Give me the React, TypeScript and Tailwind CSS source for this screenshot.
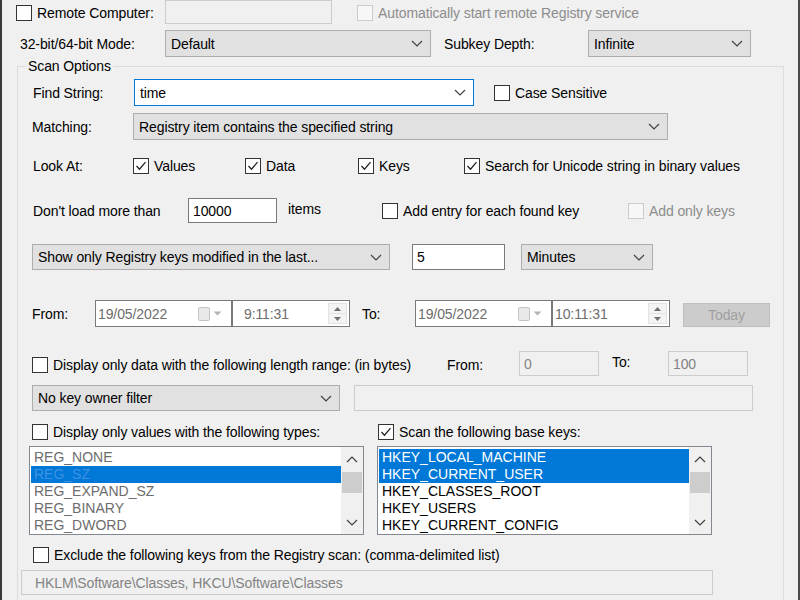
import type { ReactNode } from 'react';
import clsx from 'clsx';

function Chevron({ up }: { up?: boolean }) {
  return (
    <svg width="12" height="7" viewBox="0 0 12 7" className="shrink-0">
      <path d={up ? 'M1 6 L6 1 L11 6' : 'M1 1 L6 6 L11 1'} fill="none" stroke="#404040" strokeWidth="1.2" />
    </svg>
  );
}

function Check({ checked, disabled, label, className }: { checked?: boolean; disabled?: boolean; label: string; className?: string }) {
  return (
    <div className={clsx('flex items-center gap-[5px]', className)}>
      <div
        className={clsx(
          'w-[16px] h-[16px] shrink-0 border flex items-center justify-center',
          disabled ? 'border-[#cccccc] bg-[#f7f7f7]' : 'border-[#333333] bg-white'
        )}
      >
        {checked && (
          <svg width="14" height="14" viewBox="0 0 14 14">
            <path d="M2.5 7 L5.5 10.2 L11.5 3.2" fill="none" stroke="#222" strokeWidth="1.3" />
          </svg>
        )}
      </div>
      <span className={clsx('whitespace-nowrap', disabled && 'text-[#8c8c8c]')}>{label}</span>
    </div>
  );
}

function Combo({ className, children, focused }: { className: string; children: ReactNode; focused?: boolean }) {
  return (
    <div
      className={clsx(
        'flex items-center justify-between pl-[5px] pr-[7px] border shrink-0',
        focused ? 'bg-white border-[#0078d7]' : 'bg-[#e1e1e1] border-[#adadad]',
        className
      )}
    >
      <span className="whitespace-nowrap">{children}</span>
      <Chevron />
    </div>
  );
}

function TextBox({ className, value, disabled }: { className: string; value?: string; disabled?: boolean }) {
  return (
    <div
      className={clsx(
        'flex items-center pl-[4px] border shrink-0 whitespace-nowrap',
        disabled ? 'bg-[#f0f0f0] border-[#cccccc] text-[#838383]' : 'bg-white border-[#7a7a7a]',
        className
      )}
    >
      {value}
    </div>
  );
}

function DatePicker({ date, time, timePad }: { date: string; time: string; timePad: string }) {
  return (
    <div className="flex h-[27px]">
      <div className="w-[137px] h-full bg-white border border-[#7a7a7a] flex items-center pl-[2px] text-[#6d6d6d]">
        <span className="flex-1">{date}</span>
        <div className="w-[12px] h-[14px] rounded-[2px] border border-[#c4c4c4] bg-[#e9e9e9]" />
        <svg width="9" height="5" viewBox="0 0 9 5" className="ml-[3px] mr-[9px]">
          <path d="M0.5 0.5 L8.5 0.5 L4.5 4.5 Z" fill="#b5b5b5" />
        </svg>
      </div>
      <div className={clsx('w-[118px] h-full bg-white border border-[#7a7a7a] flex items-center text-[#6d6d6d]', timePad)}>
        <span className="flex-1">{time}</span>
        <div className="w-[19px] h-[21px] mr-[2px] flex flex-col border border-[#e2e2e2] bg-[#f4f4f4]">
          <div className="flex-1 flex items-center justify-center border-b border-[#e2e2e2]">
            <svg width="7" height="4" viewBox="0 0 7 4">
              <path d="M0 4 L3.5 0 L7 4 Z" fill="#707070" />
            </svg>
          </div>
          <div className="flex-1 flex items-center justify-center">
            <svg width="7" height="4" viewBox="0 0 7 4">
              <path d="M0 0 L7 0 L3.5 4 Z" fill="#707070" />
            </svg>
          </div>
        </div>
      </div>
    </div>
  );
}

function ScrollBar() {
  return (
    <div className="w-[22px] h-full flex flex-col bg-[#f0f0f0]">
      <div className="h-[24px] flex items-center justify-center">
        <Chevron up />
      </div>
      <div className="flex-1">
        <div className="mt-[1px] mx-[1px] h-[21px] bg-[#cdcdcd]" />
      </div>
      <div className="h-[24px] flex items-center justify-center">
        <Chevron />
      </div>
    </div>
  );
}

function ListBox({ items, selected, disabled }: { items: string[]; selected: number[]; disabled?: boolean }) {
  return (
    <div className="w-[335px] h-[89px] shrink-0 bg-white border border-[#828790] flex">
      <div className="flex-1 pt-[2px] pl-[1px]">
        {items.map((item, i) => {
          const isSel = selected.includes(i);
          return (
            <div
              key={item}
              className={clsx(
                'h-[17px] leading-[17px] pl-[3px] whitespace-nowrap tracking-normal',
                isSel ? 'bg-[#0078d7]' : '',
                isSel ? (disabled ? 'text-[#3f92e2]' : 'text-white') : disabled ? 'text-[#6d6d6d]' : 'text-black'
              )}
            >
              {item}
            </div>
          );
        })}
      </div>
      <ScrollBar />
    </div>
  );
}

export default function App() {
  return (
    <div className="w-[800px] h-[600px] overflow-hidden bg-[#f0f0f0] text-black text-[14px] leading-[16px] tracking-[-0.1px] font-['Liberation_Sans',Arial,sans-serif] shadow-[inset_2px_0_0_#3a3a3a,inset_-2px_0_0_#4a4a4a]">
      {/* remote computer */}
      <div className="flex items-center h-[24px]">
        <div className="w-[165px] pl-[16px] pt-[2px] shrink-0">
          <Check label="Remote Computer:" />
        </div>
        <TextBox className="w-[167px] h-[24px]" disabled />
        <Check className="ml-[25px] gap-[4px] pt-[2px]" disabled label="Automatically start remote Registry service" />
      </div>

      {/* mode / depth */}
      <div className="flex items-center h-[27px] mt-[6px]">
        <div className="w-[165px] pl-[20px] shrink-0">32-bit/64-bit Mode:</div>
        <Combo className="w-[266px] h-[27px]">Default</Combo>
        <div className="w-[157px] pl-[13px] shrink-0">Subkey Depth:</div>
        <Combo className="w-[163px] h-[27px]">Infinite</Combo>
      </div>

      <fieldset className="mt-[1px] ml-[17px] w-[767px] min-w-0 border border-[#dcdcdc] pb-[30px]">
        <legend className="ml-[8px] px-[2px] leading-[16px]">Scan Options</legend>

        <div className="flex items-center h-[27px] mt-[5px]">
          <div className="w-[116px] pl-[15px] shrink-0">Find String:</div>
          <Combo focused className="w-[340px] h-[27px] pl-[4px]">time</Combo>
          <Check className="ml-[20px]" label="Case Sensitive" />
        </div>

        <div className="flex items-center h-[27px] mt-[7px]">
          <div className="w-[115px] pl-[14px] shrink-0">Matching:</div>
          <Combo className="w-[535px] h-[27px]">Registry item contains the specified string</Combo>
        </div>

        <div className="flex items-center h-[20px] mt-[16px]">
          <div className="w-[115px] pl-[15px] shrink-0">Look At:</div>
          <div className="w-[112px] shrink-0">
            <Check checked label="Values" className="gap-[4px]" />
          </div>
          <div className="w-[113px] shrink-0">
            <Check checked label="Data" className="gap-[4px]" />
          </div>
          <div className="w-[106px] shrink-0">
            <Check checked label="Keys" className="gap-[4px]" />
          </div>
          <Check checked label="Search for Unicode string in binary values" />
        </div>

        <div className="flex items-center h-[25px] mt-[22px]">
          <div className="w-[170px] pl-[15px] shrink-0">Don't load more than</div>
          <TextBox className="w-[89px] h-[25px]" value="10000" />
          <div className="w-[105px] pl-[11px] shrink-0 -mt-[3px]">items</div>
          <div className="w-[246px] shrink-0">
            <Check label="Add entry for each found key" className="gap-[4px]" />
          </div>
          <Check disabled label="Add only keys" className="gap-[4px]" />
        </div>

        <div className="flex items-center h-[26px] mt-[21px] pl-[14px]">
          <Combo className="w-[358px] h-[26px]">Show only Registry keys modified in the last...</Combo>
          <TextBox className="ml-[22px] w-[93px] h-[26px]" value="5" />
          <Combo className="ml-[16px] w-[132px] h-[26px]">Minutes</Combo>
        </div>

        <div className="flex items-center h-[27px] mt-[30px]">
          <div className="w-[77px] pl-[14px] shrink-0">From:</div>
          <DatePicker date="19/05/2022" time="9:11:31" timePad="pl-[11px]" />
          <div className="w-[65px] pl-[12px] shrink-0">To:</div>
          <DatePicker date="19/05/2022" time="10:11:31" timePad="pl-[2px]" />
          <div className="ml-[13px] mt-[3px] w-[87px] h-[24px] bg-[#cccccc] border border-[#bfbfbf] flex items-center justify-center text-[#a0a0a0]">
            Today
          </div>
        </div>

        <div className="flex items-center h-[25px] mt-[24px]">
          <div className="w-[429px] pl-[14px] shrink-0 pt-[2px]">
            <Check label="Display only data with the following length range: (in bytes)" />
          </div>
          <div className="w-[72px] shrink-0 pt-[2px]">From:</div>
          <TextBox className="w-[80px] h-[25px]" value="0" disabled />
          <div className="w-[69px] pl-[13px] shrink-0 -mt-[4px]">To:</div>
          <TextBox className="w-[80px] h-[25px]" value="100" disabled />
        </div>

        <div className="flex items-center h-[26px] mt-[9px] pl-[14px]">
          <Combo className="w-[308px] h-[26px]">No key owner filter</Combo>
          <TextBox className="ml-[14px] w-[399px] h-[26px]" disabled />
        </div>

        <div className="flex items-center h-[20px] mt-[11px] pl-[14px]">
          <div className="w-[346px] shrink-0">
            <Check label="Display only values with the following types:" />
          </div>
          <Check checked label="Scan the following base keys:" />
        </div>

        <div className="flex mt-[4px] pl-[11px]">
          <ListBox
            disabled
            items={['REG_NONE', 'REG_SZ', 'REG_EXPAND_SZ', 'REG_BINARY', 'REG_DWORD']}
            selected={[1]}
          />
          <div className="ml-[13px]">
            <ListBox
              items={['HKEY_LOCAL_MACHINE', 'HKEY_CURRENT_USER', 'HKEY_CLASSES_ROOT', 'HKEY_USERS', 'HKEY_CURRENT_CONFIG']}
              selected={[0, 1]}
            />
          </div>
        </div>

        <div className="flex items-center h-[20px] mt-[10px] pl-[15px]">
          <Check label="Exclude the following keys from the Registry scan: (comma-delimited list)" />
        </div>

        <div className="flex items-center h-[25px] mt-[5px] pl-[3px]">
          <TextBox className="w-[692px] h-[25px] pl-[13px]" value="HKLM\Software\Classes, HKCU\Software\Classes" disabled />
        </div>
      </fieldset>
    </div>
  );
}
